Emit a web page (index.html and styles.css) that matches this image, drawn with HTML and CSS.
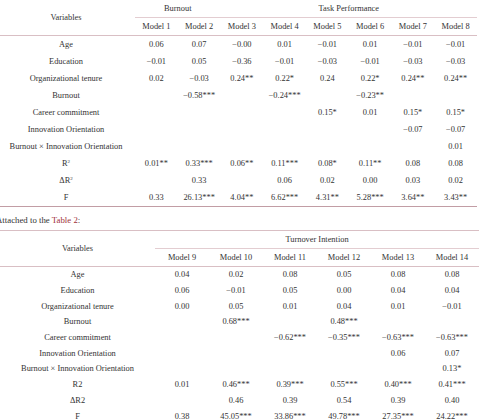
FILE: index.html
```html
<!DOCTYPE html>
<html lang="en">
<head>
    <meta charset="UTF-8">
    <title>Regression results</title>
    <link rel="stylesheet" href="styles.css">
</head>
<body>

<!-- Tabla principal -->
<table class="tabla t1">
    <colgroup>
        <col class="var-col">
        <col span="8">
    </colgroup>
    <tr class="head">
        <td rowspan="2" class="var">Variables</td>
        <td colspan="2" class="group">Burnout</td>
        <td colspan="6" class="group">Task Performance</td>
    </tr>
    <tr class="head models">
        <td>Model 1</td><td>Model 2</td><td>Model 3</td><td>Model 4</td>
        <td>Model 5</td><td>Model 6</td><td>Model 7</td><td>Model 8</td>
    </tr>
    <tr><td>Age</td><td>0.06</td><td>0.07</td><td>−0.00</td><td>0.01</td><td>−0.01</td><td>0.01</td><td>−0.01</td><td>−0.01</td></tr>
    <tr><td>Education</td><td>−0.01</td><td>0.05</td><td>−0.36</td><td>−0.01</td><td>−0.03</td><td>−0.01</td><td>−0.03</td><td>−0.03</td></tr>
    <tr><td>Organizational tenure</td><td>0.02</td><td>−0.03</td><td>0.24**</td><td>0.22*</td><td>0.24</td><td>0.22*</td><td>0.24**</td><td>0.24**</td></tr>
    <tr><td>Burnout</td><td></td><td>−0.58***</td><td></td><td>−0.24***</td><td></td><td>−0.23**</td><td></td><td></td></tr>
    <tr><td>Career commitment</td><td></td><td></td><td></td><td></td><td>0.15*</td><td>0.01</td><td>0.15*</td><td>0.15*</td></tr>
    <tr><td>Innovation Orientation</td><td></td><td></td><td></td><td></td><td></td><td></td><td>−0.07</td><td>−0.07</td></tr>
    <tr><td>Burnout × Innovation Orientation</td><td></td><td></td><td></td><td></td><td></td><td></td><td></td><td>0.01</td></tr>
    <tr><td>R<sup>2</sup></td><td>0.01**</td><td>0.33***</td><td>0.06**</td><td>0.11***</td><td>0.08*</td><td>0.11**</td><td>0.08</td><td>0.08</td></tr>
    <tr><td>ΔR<sup>2</sup></td><td></td><td>0.33</td><td></td><td>0.06</td><td>0.02</td><td>0.00</td><td>0.03</td><td>0.02</td></tr>
    <tr class="last"><td>F</td><td>0.33</td><td>26.13***</td><td>4.04**</td><td>6.62***</td><td>4.31**</td><td>5.28***</td><td>3.64**</td><td>3.43**</td></tr>
</table>

<p class="nota">Attached to the <a href="#">Table 2</a>:</p>

<!-- Tabla anexa -->
<table class="tabla t2">
    <colgroup>
        <col class="var-col">
        <col span="6">
    </colgroup>
    <tr class="head">
        <td rowspan="2" class="var">Variables</td>
        <td colspan="6" class="group">Turnover Intention</td>
    </tr>
    <tr class="head models">
        <td>Model 9</td><td>Model 10</td><td>Model 11</td><td>Model 12</td><td>Model 13</td><td>Model 14</td>
    </tr>
    <tr><td>Age</td><td>0.04</td><td>0.02</td><td>0.08</td><td>0.05</td><td>0.08</td><td>0.08</td></tr>
    <tr><td>Education</td><td>0.06</td><td>−0.01</td><td>0.05</td><td>0.00</td><td>0.04</td><td>0.04</td></tr>
    <tr><td>Organizational tenure</td><td>0.00</td><td>0.05</td><td>0.01</td><td>0.04</td><td>0.01</td><td>−0.01</td></tr>
    <tr><td>Burnout</td><td></td><td>0.68***</td><td></td><td>0.48***</td><td></td><td></td></tr>
    <tr><td>Career commitment</td><td></td><td></td><td>−0.62***</td><td>−0.35***</td><td>−0.63***</td><td>−0.63***</td></tr>
    <tr><td>Innovation Orientation</td><td></td><td></td><td></td><td></td><td>0.06</td><td>0.07</td></tr>
    <tr><td>Burnout × Innovation Orientation</td><td></td><td></td><td></td><td></td><td></td><td>0.13*</td></tr>
    <tr><td>R2</td><td>0.01</td><td>0.46***</td><td>0.39***</td><td>0.55***</td><td>0.40***</td><td>0.41***</td></tr>
    <tr><td>ΔR2</td><td></td><td>0.46</td><td>0.39</td><td>0.54</td><td>0.39</td><td>0.40</td></tr>
    <tr><td>F</td><td>0.38</td><td>45.05***</td><td>33.86***</td><td>49.78***</td><td>27.35***</td><td>24.22***</td></tr>
</table>

</body>
</html>
```

FILE: styles.css
```css
body {
    margin: 0;
    font-family: "Liberation Serif", "Times New Roman", serif;
    color: #333;
    background-color: #fff;
    overflow: hidden;
}

.tabla {
    border-collapse: collapse;
    table-layout: fixed;
    font-size: 8.4px;
}

.tabla td {
    padding: 0;
    text-align: center;
    vertical-align: middle;
    white-space: nowrap;
    height: 17px;
}

.tabla sup {
    font-size: 5px;
    vertical-align: 3px;
    line-height: 0;
}

.head .group {
    border-bottom: 1px solid #e3cdd1;
}

.models td {
    border-bottom: 1px solid #d9bfc4;
}

.head .var {
    border-bottom: 1px solid #d9bfc4;
}

.t1 {
    width: 477px;
}

.t1 .var-col {
    width: 135px;
}

.t1 tr td:first-child {
    padding-right: 3px;
}

.t1 .models td:first-child {
    padding-right: 0;
}

.t1 .last td {
    border-bottom: 1px solid #c29da5;
}

.nota {
    margin: 0 0 0 -4px;
    height: 23px;
    line-height: 26px;
    font-size: 8.8px;
    color: #333;
}

.nota a {
    color: #a0303a;
    text-decoration: none;
}

.t2 {
    width: 479px;
    border-top: 1px solid #d9bfc4;
}

.t2 .var-col {
    width: 155px;
}

.t2 tr:not(.head) td {
    height: 15.7px;
}
```
